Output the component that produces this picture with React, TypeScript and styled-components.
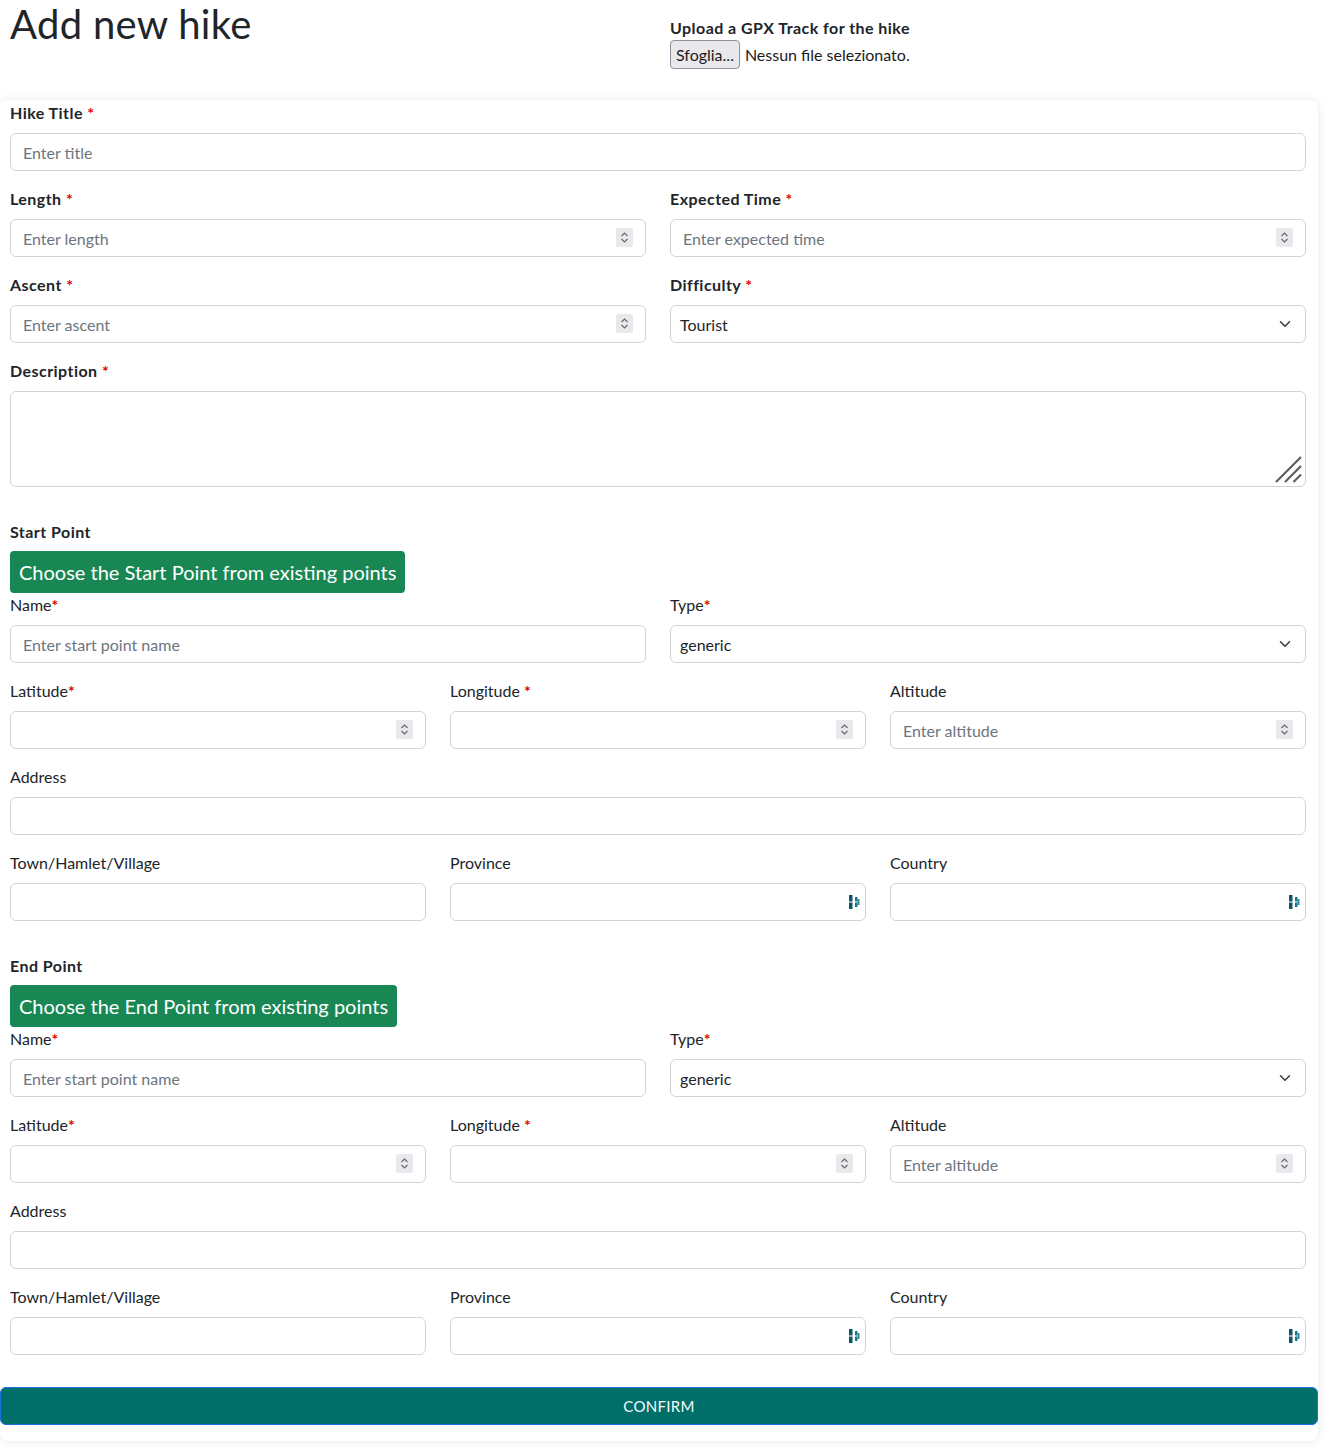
import React from 'react';
import styled, { createGlobalStyle } from 'styled-components';

const GlobalStyle = createGlobalStyle`
    *, *::before, *::after { box-sizing: border-box; }
    body {
        margin: 0;
        background: #fff;
        color: #212529;
        font-family: Lato, "Open Sans", "Noto Sans", sans-serif;
        font-size: 16px;
        line-height: 24px;
    }
`;

function SpinIcon(){
    return(
        <Spinner width="17" height="19" viewBox="0 0 17 19">
            <rect width="17" height="19" rx="2" fill="#e9e9ed" />
            <path d="M5.5 8 L8.5 5 L11.5 8" fill="none" stroke="#6a6a6a" strokeWidth="1.2" />
            <path d="M5.5 11 L8.5 14 L11.5 11" fill="none" stroke="#6a6a6a" strokeWidth="1.2" />
        </Spinner>
    )
}

function AutofillIcon(){
    return(
        <Autofill width="12" height="16" viewBox="0 0 12 16">
            <rect x="0" y="1" width="3.5" height="6.5" fill="#0c5566" />
            <rect x="0" y="8.5" width="3.5" height="6.5" fill="#0c5566" />
            <rect x="6" y="3" width="2.5" height="4.5" fill="#16788a" />
            <rect x="6" y="8.5" width="2.5" height="4.5" fill="#16788a" />
            <rect x="8.5" y="5" width="2" height="6" fill="#2b8d9d" />
        </Autofill>
    )
}

function NumberInput({ placeholder }: { placeholder?: string }){
    return(
        <InputWrap>
            <Input type="text" placeholder={placeholder} />
            <SpinIcon />
        </InputWrap>
    )
}

function SelectBox({ options }: { options: string[] }){
    return(
        <InputWrap>
            <Select defaultValue={options[0]}>
                {options.map(o => <option key={o}>{o}</option>)}
            </Select>
            <Chevron width="12" height="12" viewBox="0 0 16 16">
                <path d="M2 5 L8 11 L14 5" fill="none" stroke="#343a40" strokeWidth="2" strokeLinecap="round" strokeLinejoin="round" />
            </Chevron>
        </InputWrap>
    )
}

function AutofillInput(){
    return(
        <InputWrap>
            <Input type="text" />
            <AutofillIcon />
        </InputWrap>
    )
}

function PointSection({ name }: { name: string }){
    return(
        <>
            <SectionTitle>{name} Point</SectionTitle>
            <ChooseButton type="button">Choose the {name} Point from existing points</ChooseButton>
            <Grid $cols={2}>
                <Field>
                    <Label>Name<Req>*</Req></Label>
                    <Input type="text" placeholder="Enter start point name" />
                </Field>
                <Field>
                    <Label>Type<Req>*</Req></Label>
                    <SelectBox options={['generic', 'parking', 'hut']} />
                </Field>
            </Grid>
            <Grid $cols={3}>
                <Field>
                    <Label>Latitude<Req>*</Req></Label>
                    <NumberInput />
                </Field>
                <Field>
                    <Label>Longitude <Req>*</Req></Label>
                    <NumberInput />
                </Field>
                <Field>
                    <Label>Altitude</Label>
                    <NumberInput placeholder="Enter altitude" />
                </Field>
            </Grid>
            <Field>
                <Label>Address</Label>
                <Input type="text" />
            </Field>
            <Grid $cols={3}>
                <Field>
                    <Label>Town/Hamlet/Village</Label>
                    <Input type="text" />
                </Field>
                <Field>
                    <Label>Province</Label>
                    <AutofillInput />
                </Field>
                <Field>
                    <Label>Country</Label>
                    <AutofillInput />
                </Field>
            </Grid>
        </>
    )
}

function App(){
    return(
        <Page>
            <GlobalStyle />
            <Header>
                <Title>Add new hike</Title>
                <Upload>
                    <Label $bold>Upload a GPX Track for the hike</Label>
                    <FileRow>
                        <FileButton type="button">Sfoglia...</FileButton>
                        <FileName>Nessun file selezionato.</FileName>
                    </FileRow>
                </Upload>
            </Header>
            <Card>
                <FormBody>
                    <Field>
                        <Label $bold>Hike Title <Req>*</Req></Label>
                        <Input type="text" placeholder="Enter title" />
                    </Field>
                    <Grid $cols={2}>
                        <Field>
                            <Label $bold>Length <Req>*</Req></Label>
                            <NumberInput placeholder="Enter length" />
                        </Field>
                        <Field>
                            <Label $bold>Expected Time <Req>*</Req></Label>
                            <NumberInput placeholder="Enter expected time" />
                        </Field>
                        <Field>
                            <Label $bold>Ascent <Req>*</Req></Label>
                            <NumberInput placeholder="Enter ascent" />
                        </Field>
                        <Field>
                            <Label $bold>Difficulty <Req>*</Req></Label>
                            <SelectBox options={['Tourist', 'Hiker', 'Professional hiker']} />
                        </Field>
                    </Grid>
                    <Field>
                        <Label $bold>Description <Req>*</Req></Label>
                        <InputWrap>
                            <TextArea />
                            <Grip width="30" height="30" viewBox="0 0 30 30">
                                <path d="M3 28 L28 3 M12 28 L28 12 M20.5 28 L28 20.5" stroke="#5e5e5e" strokeWidth="2.2" />
                            </Grip>
                        </InputWrap>
                    </Field>
                    <PointSection name="Start" />
                    <PointSection name="End" />
                </FormBody>
                <ConfirmButton type="button">CONFIRM</ConfirmButton>
            </Card>
        </Page>
    )
}

const Page = styled.div`
    width: 1332px;
    padding-bottom: 10px;
`;

const Header = styled.div`
    display: grid;
    grid-template-columns: 1fr 1fr;
    column-gap: 24px;
    height: 100px;
    padding: 0 26px 0 10px;
`;

const Title = styled.h1`
    margin: 0;
    font-size: 40px;
    line-height: 48px;
    font-weight: 400;
    letter-spacing: 0.3px;
    color: #212529;
`;

const Upload = styled.div`
    padding-top: 16px;

    label{
        margin-bottom: 0;
    }
`;

const FileRow = styled.div`
    display: flex;
    align-items: center;
    gap: 5px;
`;

const FileButton = styled.button`
    height: 29px;
    padding: 0 5px;
    background: #e9e9ed;
    border: 1px solid #8f8f9d;
    border-radius: 4px;
    font-family: inherit;
    font-size: 16px;
    color: #1b1b1b;
`;

const FileName = styled.span`
    font-size: 16px;
    color: #1b1b1b;
`;

const Card = styled.div`
    width: 1318px;
    background: #fff;
    border-radius: 8px;
    box-shadow: 0 0 10px rgba(0, 0, 0, 0.1);
    padding: 1px 0 16px 0;
`;

const FormBody = styled.div`
    padding: 0 12px 0 10px;
`;

const Grid = styled.div<{ $cols: number }>`
    display: grid;
    grid-template-columns: repeat(${p => p.$cols}, 1fr);
    column-gap: 24px;
`;

const Field = styled.div`
    margin-bottom: 16px;
`;

const Label = styled.label<{ $bold?: boolean }>`
    display: block;
    margin-bottom: 8px;
    font-size: 16px;
    line-height: 24px;
    font-weight: ${p => p.$bold ? 700 : 400};
    letter-spacing: ${p => p.$bold ? '0.45px' : '0'};
    color: #212529;
`;

const Req = styled.span`
    color: #e00000;
    font-weight: 700;
`;

const InputWrap = styled.div`
    position: relative;
`;

const Input = styled.input`
    display: block;
    width: 100%;
    height: 38px;
    padding: 0 12px;
    border: 1px solid #ced4da;
    border-radius: 6px;
    font-family: inherit;
    font-size: 16px;
    color: #212529;
    background: #fff;
    outline: none;

    &::placeholder{
        color: #6c757d;
    }
`;

const Spinner = styled.svg`
    position: absolute;
    right: 13px;
    top: 9px;
`;

const Autofill = styled.svg`
    position: absolute;
    right: 5px;
    top: 11px;
`;

const Select = styled.select`
    display: block;
    width: 100%;
    height: 38px;
    padding: 0 36px 0 9px;
    border: 1px solid #ced4da;
    border-radius: 6px;
    font-family: inherit;
    font-size: 16px;
    color: #212529;
    background: #fff;
    appearance: none;
    outline: none;
`;

const Chevron = styled.svg`
    position: absolute;
    right: 15px;
    top: 13px;
    pointer-events: none;
`;

const TextArea = styled.textarea`
    display: block;
    width: 100%;
    height: 96px;
    padding: 6px 12px;
    border: 1px solid #ced4da;
    border-radius: 6px;
    font-family: inherit;
    font-size: 16px;
    resize: none;
    outline: none;
`;

const Grip = styled.svg`
    position: absolute;
    right: 3px;
    bottom: 3px;
    pointer-events: none;
`;

const SectionTitle = styled.div`
    margin: 0 0 7px;
    padding-top: 17px;
    font-weight: 700;
    font-size: 16px;
    line-height: 24px;
    letter-spacing: 0.45px;
    color: #212529;
`;

const ChooseButton = styled.button`
    display: block;
    padding: 6px 9px;
    background: #198754;
    border: none;
    border-radius: 4px;
    color: #fff;
    font-family: inherit;
    font-size: 20px;
    line-height: 30px;
`;

const ConfirmButton = styled.button`
    display: block;
    width: 100%;
    height: 38px;
    margin-top: 16px;
    background: #006e69;
    border: 1px solid #1a6fe0;
    border-radius: 6px;
    color: #f4fbfa;
    font-family: inherit;
    font-size: 15px;
    font-weight: 400;
    letter-spacing: 0.3px;
`;

export default App;
